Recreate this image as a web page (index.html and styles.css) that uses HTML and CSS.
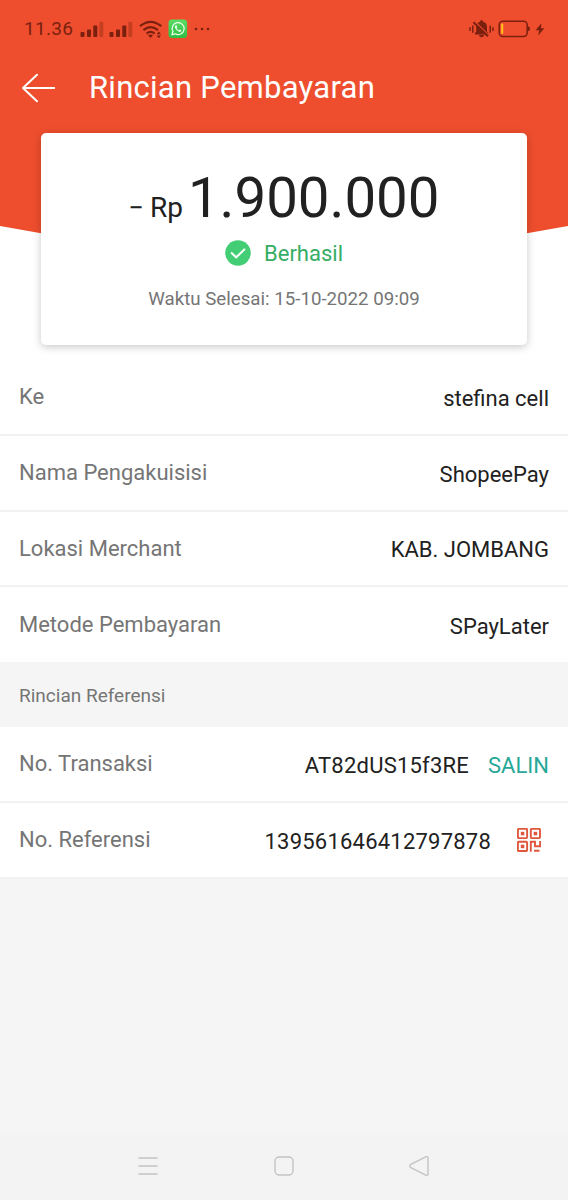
FILE: index.html
```html
<!DOCTYPE html>
<html lang="id">
<head>
<meta charset="utf-8">
<title>Rincian Pembayaran</title>
<link rel="stylesheet" href="styles.css">
</head>
<body>
<div class="screen">
  <header class="hero">
    <div class="status">
      <span class="clock">11.36</span>
      <svg class="sig" width="24" height="17" viewBox="0 0 24 17"><g fill="#7b1f0f"><rect x="0.5" y="11" width="4" height="5" rx="1"/><rect x="7" y="8.6" width="4" height="7.4" rx="1"/><rect x="13.3" y="4.5" width="4" height="11.5" rx="1"/></g><rect x="19.3" y="0.7" width="4" height="15.3" rx="1" fill="#c63e20"/></svg>
      <svg class="sig2" width="24" height="17" viewBox="0 0 24 17"><g fill="#7b1f0f"><rect x="0.5" y="11" width="4" height="5" rx="1"/><rect x="7" y="8.6" width="4" height="7.4" rx="1"/><rect x="13.3" y="4.5" width="4" height="11.5" rx="1"/></g><rect x="19.3" y="0.7" width="4" height="15.3" rx="1" fill="#c63e20"/></svg>
      <svg class="wifi" width="24" height="19" viewBox="0 0 24 19"><g fill="none" stroke="#7b1f0f" stroke-width="2.2"><path d="M1 6.2Q11.5-2.6 22.3 6.2"/><path d="M4.4 10.2Q11.5 4.2 19 10.2"/><path d="M7.6 13.6Q11.5 10.2 15.6 13.6"/></g><path d="M9 15.2Q11.5 13.6 14 15.2L11.5 18Z" fill="#7b1f0f"/><path d="M17.6 14.2L19.8 11.6 22 14.2ZM17.6 15.6L19.8 18.2 22 15.6Z" fill="#7b1f0f"/></svg>
      <svg class="wa" width="20" height="20" viewBox="0 0 20 20"><defs><linearGradient id="g" x1="0" y1="0" x2="0" y2="1"><stop offset="0" stop-color="#5bdc64"/><stop offset="1" stop-color="#2fbd42"/></linearGradient></defs><rect x="0.5" y="0.5" width="18.6" height="18.6" rx="3.5" fill="url(#g)"/><path d="M4 15.7L4.9 12.5A6 6 0 1 1 7.2 14.8Z" fill="none" stroke="#effff0" stroke-width="1.2"/><path d="M7.5 6.6Q8.3 5.8 8.8 6.8L9.2 8Q9.2 8.5 8.5 9Q9.4 10.7 11 11.3L11.8 10.5L13.4 11.3Q13.2 13 11.5 12.9Q8.3 12.2 7 8.8Q6.7 7.5 7.5 6.6Z" fill="#effff0"/></svg>
      <svg class="dots" width="16" height="4" viewBox="0 0 16 4"><g fill="#7b1f0f"><circle cx="2" cy="2" r="1.3"/><circle cx="8" cy="2" r="1.3"/><circle cx="14" cy="2" r="1.3"/></g></svg>
      <svg class="mute" width="25" height="20" viewBox="0 0 25 20"><g fill="#7b1f0f"><path d="M6 15.5V14L7.2 12.8V8Q7.2 3.7 11 2.7Q11.4 1 12.6 1Q13.8 1 14.1 2.7Q18 3.7 18 8V12.8L19.3 14V15.5Z"/><path d="M9.8 16H15.2Q14.5 18.2 12.5 18.2Q10.5 18.2 9.8 16Z"/></g><path d="M6.3 3L20 16.4" stroke="#ee4e2e" stroke-width="1.3"/><path d="M4.5 3.2L19 17.2" stroke="#7b1f0f" stroke-width="1.9"/><path d="M1 8.2V12M3.8 6.4V13.8M21.2 6.4V13.8M24 8.2V12" stroke="#7b1f0f" stroke-width="1.5"/></svg>
      <svg class="batt" width="33" height="18" viewBox="0 0 33 18"><rect x="1.2" y="1.2" width="28" height="15.2" rx="3.6" fill="none" stroke="#7b1f0f" stroke-width="1.5"/><rect x="3.2" y="3.6" width="2" height="10.5" rx="1" fill="#ffc21c"/><path d="M29.8 6.3Q32 6.5 32 8.8Q32 11.1 29.8 11.3Z" fill="#7b1f0f"/></svg>
      <svg class="bolt" width="10" height="13" viewBox="0 0 10 13"><path d="M6.4 0.3L0.6 7.2H4.1L3.2 12.4L9.3 5.2H5.9Z" fill="#7b1f0f"/></svg>
    </div>
    <div class="titlebar">
      <svg class="back" width="34" height="30" viewBox="0 0 34 30"><path d="M15 1.8L1 15L15 28.2M1 15H32.2" fill="none" stroke="#fff" stroke-width="2" stroke-linecap="round" stroke-linejoin="round"/></svg>
      <h1 class="title">Rincian Pembayaran</h1>
    </div>
  </header>
  <main class="content">
    <section class="card">
      <div class="amount"><span class="minus">−</span><span class="currency">Rp</span><span class="value">1.900.000</span></div>
      <div class="result">
        <svg width="26" height="26" viewBox="0 0 26 26"><circle cx="13" cy="13" r="12.8" fill="#43ce75"/><path d="M6.1 12.6L11.2 17.3L20 8.9" fill="none" stroke="#fff" stroke-width="2"/></svg>
        <span class="result-text">Berhasil</span>
      </div>
      <div class="time">Waktu Selesai: 15-10-2022 09:09</div>
    </section>
    <div class="rows">
      <div class="row"><span class="label">Ke</span><span class="data">stefina cell</span></div>
      <div class="row"><span class="label">Nama Pengakuisisi</span><span class="data">ShopeePay</span></div>
      <div class="row"><span class="label">Lokasi Merchant</span><span class="data">KAB. JOMBANG</span></div>
      <div class="row last"><span class="label">Metode Pembayaran</span><span class="data">SPayLater</span></div>
    </div>
    <h2 class="section">Rincian Referensi</h2>
    <div class="rows">
      <div class="row"><span class="label">No. Transaksi</span><span class="data code">AT82dUS15f3RE</span><span class="copy">SALIN</span></div>
      <div class="row"><span class="label">No. Referensi</span><span class="data code">139561646412797878</span>
        <svg class="qr" width="24" height="24" viewBox="0 0 24 24"><g fill="none" stroke="#df583e" stroke-width="1.9"><rect x="0.9" y="0.9" width="9.2" height="9.2" rx="0.8"/><rect x="13.8" y="0.9" width="9.2" height="9.2" rx="0.8"/><rect x="0.9" y="13.8" width="9.2" height="9.2" rx="0.8"/><path d="M13.8 23.8V13.8H18V18.2H23.1V13M17 22.7H22.5"/></g><g fill="#df583e"><rect x="3.8" y="3.8" width="3.5" height="3.5"/><rect x="16.7" y="3.8" width="3.5" height="3.5"/><rect x="3.8" y="16.7" width="3.5" height="3.5"/></g></svg>
      </div>
    </div>
  </main>
  <nav class="nav">
    <svg width="22" height="22" viewBox="0 0 22 22"><path d="M1.5 3H20.5M1.5 11H20.5M1.5 19H20.5" stroke="#c3c3c3" stroke-width="1.4"/></svg>
    <svg width="22" height="22" viewBox="0 0 22 22"><rect x="2" y="2" width="18" height="18" rx="4" fill="none" stroke="#c3c3c3" stroke-width="1.4"/></svg>
    <svg width="22" height="22" viewBox="0 0 22 22"><path d="M18.2 1.7L2.4 9.7Q0.9 11 2.4 12.3L18.2 20.3Q20 20.8 20 19V3Q20 1.2 18.2 1.7Z" fill="none" stroke="#c3c3c3" stroke-width="1.4"/></svg>
  </nav>
</div>
</body>
</html>
```
FILE: styles.css
```css
* { box-sizing: border-box; }
body { margin: 0; font-family: Roboto, "Liberation Sans", sans-serif; color: #212121; }
svg { display: block; flex: none; }
.screen { width: 568px; height: 1200px; display: flex; flex-direction: column; background: linear-gradient(#fff 0 600px, #f5f5f5 600px); overflow: hidden; }
.hero { flex: none; height: 278px; margin-bottom: -145px; background: #ee4e2e; clip-path: polygon(0 0, 100% 0, 100% 226px, 93% 233px, 284px 240px, 7% 233px, 0 226px); }
.status { display: flex; align-items: center; height: 58px; padding-left: 24px; color: #7b1f0f; }
.clock { width: 56px; font-size: 19px; line-height: 24px; letter-spacing: 0.3px; }
.sig2 { margin-left: 5px; }
.wifi { margin-left: 6px; }
.wa { margin-left: 5px; }
.dots { margin-left: 6px; }
.mute { margin-left: 259px; }
.batt { margin-left: 4px; }
.bolt { margin-left: 4px; }
.titlebar { display: flex; align-items: center; height: 60px; padding-left: 22px; }
.title { margin: 0 0 0 33px; font-size: 31px; line-height: 40px; font-weight: 400; color: #fff; letter-spacing: 0.26px; }
.content { position: relative; flex: 1; }
.card { width: 486px; height: 212px; margin: 0 auto 15px 41px; padding-top: 31px; border-radius: 5px; background: #fff; box-shadow: 0 2px 9px rgba(0,0,0,.22); display: flex; flex-direction: column; align-items: center; }
.amount { display: flex; align-items: baseline; height: 68px; line-height: 68px; }
.minus { font-size: 27px; margin-right: 6px; }
.currency { font-size: 28px; margin-right: 5px; }
.value { font-size: 56.4px; }
.result { display: flex; align-items: center; height: 26px; margin-top: 8px; gap: 13px; }
.result-text { padding-top: 1px; font-size: 22px; line-height: 26px; color: #36ad65; }
.time { margin-top: 21px; font-size: 18.7px; line-height: 24px; color: #757575; }
.rows { background: #fff; }
.row { height: 75.8px; padding: 0 19px; display: flex; align-items: center; border-bottom: 2px solid #f2f2f2; }
.row.last { height: 74.6px; border-bottom: 0; }
.label { flex: 1; font-size: 22px; line-height: 28px; color: #757575; padding-top: 1px; }
.data { font-size: 22px; line-height: 28px; padding-top: 4px; }
.code { letter-spacing: 0.22px; }
.copy { margin-left: 19px; padding-top: 4px; font-size: 22px; line-height: 28px; color: #27a898; }
.qr { margin: 0 8px 0 26px; }
.section { margin: 0; height: 65px; padding: 0 19px; background: #f5f5f5; font-size: 19px; line-height: 68px; font-weight: 400; color: #757575; }
.nav { flex: none; height: 68px; background: #f3f3f3; display: flex; justify-content: space-between; align-items: center; padding: 0 138px 0 137px; }
```
